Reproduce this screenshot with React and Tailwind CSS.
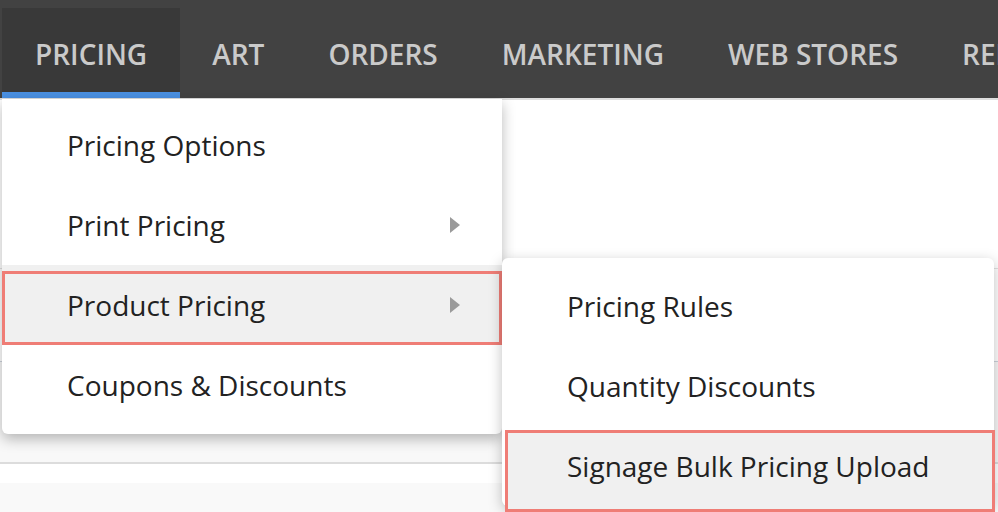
import { useState } from "react";

const tabs = ["Pricing", "Art", "Orders", "Marketing", "Web Stores", "Reports"];

const pricingItems = [
  { label: "Pricing Options" },
  { label: "Print Pricing", sub: true },
  { label: "Product Pricing", sub: true },
  { label: "Coupons & Discounts" },
];

const productPricingItems = ["Pricing Rules", "Quantity Discounts", "Signage Bulk Pricing Upload"];

function Caret() {
  return (
    <svg width="10" height="16" viewBox="0 0 10 16" className="shrink-0">
      <path d="M0 0 L10 8 L0 16 Z" fill="#9a9a9a" />
    </svg>
  );
}

function MenuRow({ label, sub, active }) {
  return (
    <div className={"relative flex items-center h-[80px] pl-[65px] pr-[42px] " + (active ? "bg-[#f0f0f0]" : "")}>
      {active && (
        <div className="absolute left-0 right-0 top-[6px] bottom-0 border-[3.5px] border-[#ef7d76] pointer-events-none" />
      )}
      <span className="flex-1 text-[28px] text-[#222]">{label}</span>
      {sub && <Caret />}
    </div>
  );
}

export default function App() {
  const [current] = useState("Pricing");

  return (
    <div className="relative w-[998px] h-[512px] overflow-hidden bg-white font-['Open_Sans',sans-serif]">
      <nav className="flex h-[98px] bg-[#424242] pl-[2px]">
        {tabs.map((t) => (
          <div
            key={t}
            className={
              "flex items-center mt-[8px] uppercase text-[28px] font-semibold whitespace-nowrap text-[#cacaca] " +
              (t === current ? "px-[33px] bg-[#393939] border-b-[6px] border-[#4a90e2] pt-[7px]" : "px-[32px] pt-[1px]")
            }
          >
            {t}
          </div>
        ))}
      </nav>

      {/* page body behind the dropdown */}
      <div className="border-t-2 border-[#dedede]">
        <div className="h-[168px]" />
        <div className="h-[93px] border-t border-[#e2e2e2]" />
        <div className="h-[101px] border-t border-[#cdd3dc] bg-[#f8f8f8]" />
        <div className="h-[21px] border-t-2 border-[#dcdcdc]" />
        <div className="h-[40px] bg-[#f9f9f9]" />
      </div>

      {/* Pricing dropdown */}
      <div className="absolute left-[2px] top-[99px] w-[500px] bg-white pt-[6px] pb-[9px] rounded-b-[6px] shadow-[0_5px_14px_rgba(0,0,0,0.28)]">
        {pricingItems.map((it) => (
          <MenuRow key={it.label} label={it.label} sub={it.sub} active={it.label === "Product Pricing"} />
        ))}
      </div>

      {/* Product Pricing submenu */}
      <div className="absolute left-[502px] top-[258px] w-[492px] bg-white pt-[8px] rounded-[6px] shadow-[0_4px_14px_rgba(0,0,0,0.25)]">
        {productPricingItems.map((label) => (
          <div key={label} className="relative flex items-center h-[80px] pl-[65px]">
            {label === "Signage Bulk Pricing Upload" && (
              <div className="absolute left-[3px] -right-[1px] top-[4px] bottom-[-6px] bg-[#f0f0f0] border-[3.5px] border-[#ef7d76]" />
            )}
            <span className="relative text-[28px] text-[#222] whitespace-nowrap">{label}</span>
          </div>
        ))}
      </div>
    </div>
  );
}
